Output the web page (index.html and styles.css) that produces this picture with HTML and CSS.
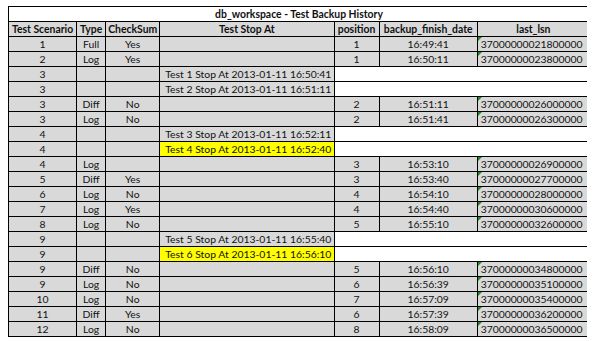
FILE: index.html
```html
<!DOCTYPE html>
<html>
<head>
<meta charset="utf-8">
<link rel="stylesheet" href="styles.css">
</head>
<body>
<table class="sheet">
<colgroup>
<col class="c1"><col class="c2"><col class="c3"><col class="c4"><col class="c5"><col class="c6"><col class="c7">
</colgroup>
<tr class="title"><td colspan="7">db_workspace - Test Backup History</td></tr>
<tr class="head"><td>Test Scenario</td><td>Type</td><td>CheckSum</td><td>Test Stop At</td><td>position</td><td>backup_finish_date</td><td>last_lsn</td></tr>
<tr><td>1</td><td>Full</td><td>Yes</td><td></td><td>1</td><td>16:49:41</td><td class="lsn">37000000021800000</td></tr>
<tr><td>2</td><td>Log</td><td>Yes</td><td></td><td>1</td><td>16:50:11</td><td class="lsn">37000000023800000</td></tr>
<tr><td>3</td><td></td><td></td><td class="stop">Test 1 Stop At 2013-01-11 16:50:41</td><td class="blank" colspan="3"></td></tr>
<tr><td>3</td><td></td><td></td><td class="stop">Test 2 Stop At 2013-01-11 16:51:11</td><td class="blank" colspan="3"></td></tr>
<tr><td>3</td><td>Diff</td><td>No</td><td></td><td>2</td><td>16:51:11</td><td class="lsn">37000000026000000</td></tr>
<tr><td>3</td><td>Log</td><td>No</td><td></td><td>2</td><td>16:51:41</td><td class="lsn">37000000026300000</td></tr>
<tr><td>4</td><td></td><td></td><td class="stop">Test 3 Stop At 2013-01-11 16:52:11</td><td class="blank" colspan="3"></td></tr>
<tr><td>4</td><td></td><td></td><td class="stop hl">Test 4 Stop At 2013-01-11 16:52:40</td><td class="blank" colspan="3"></td></tr>
<tr><td>4</td><td>Log</td><td></td><td></td><td>3</td><td>16:53:10</td><td class="lsn">37000000026900000</td></tr>
<tr><td>5</td><td>Diff</td><td>Yes</td><td></td><td>3</td><td>16:53:40</td><td class="lsn">37000000027700000</td></tr>
<tr><td>6</td><td>Log</td><td>No</td><td></td><td>4</td><td>16:54:10</td><td class="lsn">37000000028000000</td></tr>
<tr><td>7</td><td>Log</td><td>Yes</td><td></td><td>4</td><td>16:54:40</td><td class="lsn">37000000030600000</td></tr>
<tr><td>8</td><td>Log</td><td>No</td><td></td><td>5</td><td>16:55:10</td><td class="lsn">37000000032600000</td></tr>
<tr><td>9</td><td></td><td></td><td class="stop">Test 5 Stop At 2013-01-11 16:55:40</td><td class="blank" colspan="3"></td></tr>
<tr><td>9</td><td></td><td></td><td class="stop hl">Test 6 Stop At 2013-01-11 16:56:10</td><td class="blank" colspan="3"></td></tr>
<tr><td>9</td><td>Diff</td><td>No</td><td></td><td>5</td><td>16:56:10</td><td class="lsn">37000000034800000</td></tr>
<tr><td>9</td><td>Log</td><td>No</td><td></td><td>6</td><td>16:56:39</td><td class="lsn">37000000035100000</td></tr>
<tr><td>10</td><td>Log</td><td>No</td><td></td><td>7</td><td>16:57:09</td><td class="lsn">37000000035400000</td></tr>
<tr><td>11</td><td>Diff</td><td>Yes</td><td></td><td>6</td><td>16:57:39</td><td class="lsn">37000000036200000</td></tr>
<tr><td>12</td><td>Log</td><td>No</td><td></td><td>8</td><td>16:58:09</td><td class="lsn">37000000036500000</td></tr>
</table>
</body>
</html>
```
FILE: styles.css
```css
html, body {
  background: #ffffff;
}
body {
  margin: 6px 8px;
  font-family: Lato, "Liberation Sans", sans-serif;
  font-size: 10.4px;
  color: #111111;
}
.sheet {
  border-collapse: collapse;
  table-layout: fixed;
  width: 582px;
}
.c1 { width: 68px; }
.c2 { width: 29px; }
.c3 { width: 54px; }
.c4 { width: 174px; }
.c5 { width: 45px; }
.c6 { width: 98px; }
.c7 { width: 112px; }
.sheet td {
  height: 14px;
  padding: 0;
  line-height: 13px;
  border: 1px solid #000000;
  background: #d9d9d9;
  text-align: center;
  white-space: nowrap;
  overflow: hidden;
}
.sheet tr.title td {
  background: #ffffff;
  font-weight: bold;
}
.sheet tr.head td {
  font-weight: bold;
}
.sheet td.stop {
  text-align: left;
  padding-left: 5px;
}
.sheet td.hl {
  background: #ffff00;
}
.sheet td.blank {
  background: #ffffff;
  border-right: none;
}
.sheet td.lsn {
  position: relative;
  text-align: left;
  padding-left: 3px;
  letter-spacing: -0.05px;
}
.sheet td.lsn::before {
  content: "";
  position: absolute;
  left: 0;
  top: 0;
  width: 0;
  height: 0;
  border-top: 4px solid #1f8b24;
  border-right: 4px solid transparent;
}
```
